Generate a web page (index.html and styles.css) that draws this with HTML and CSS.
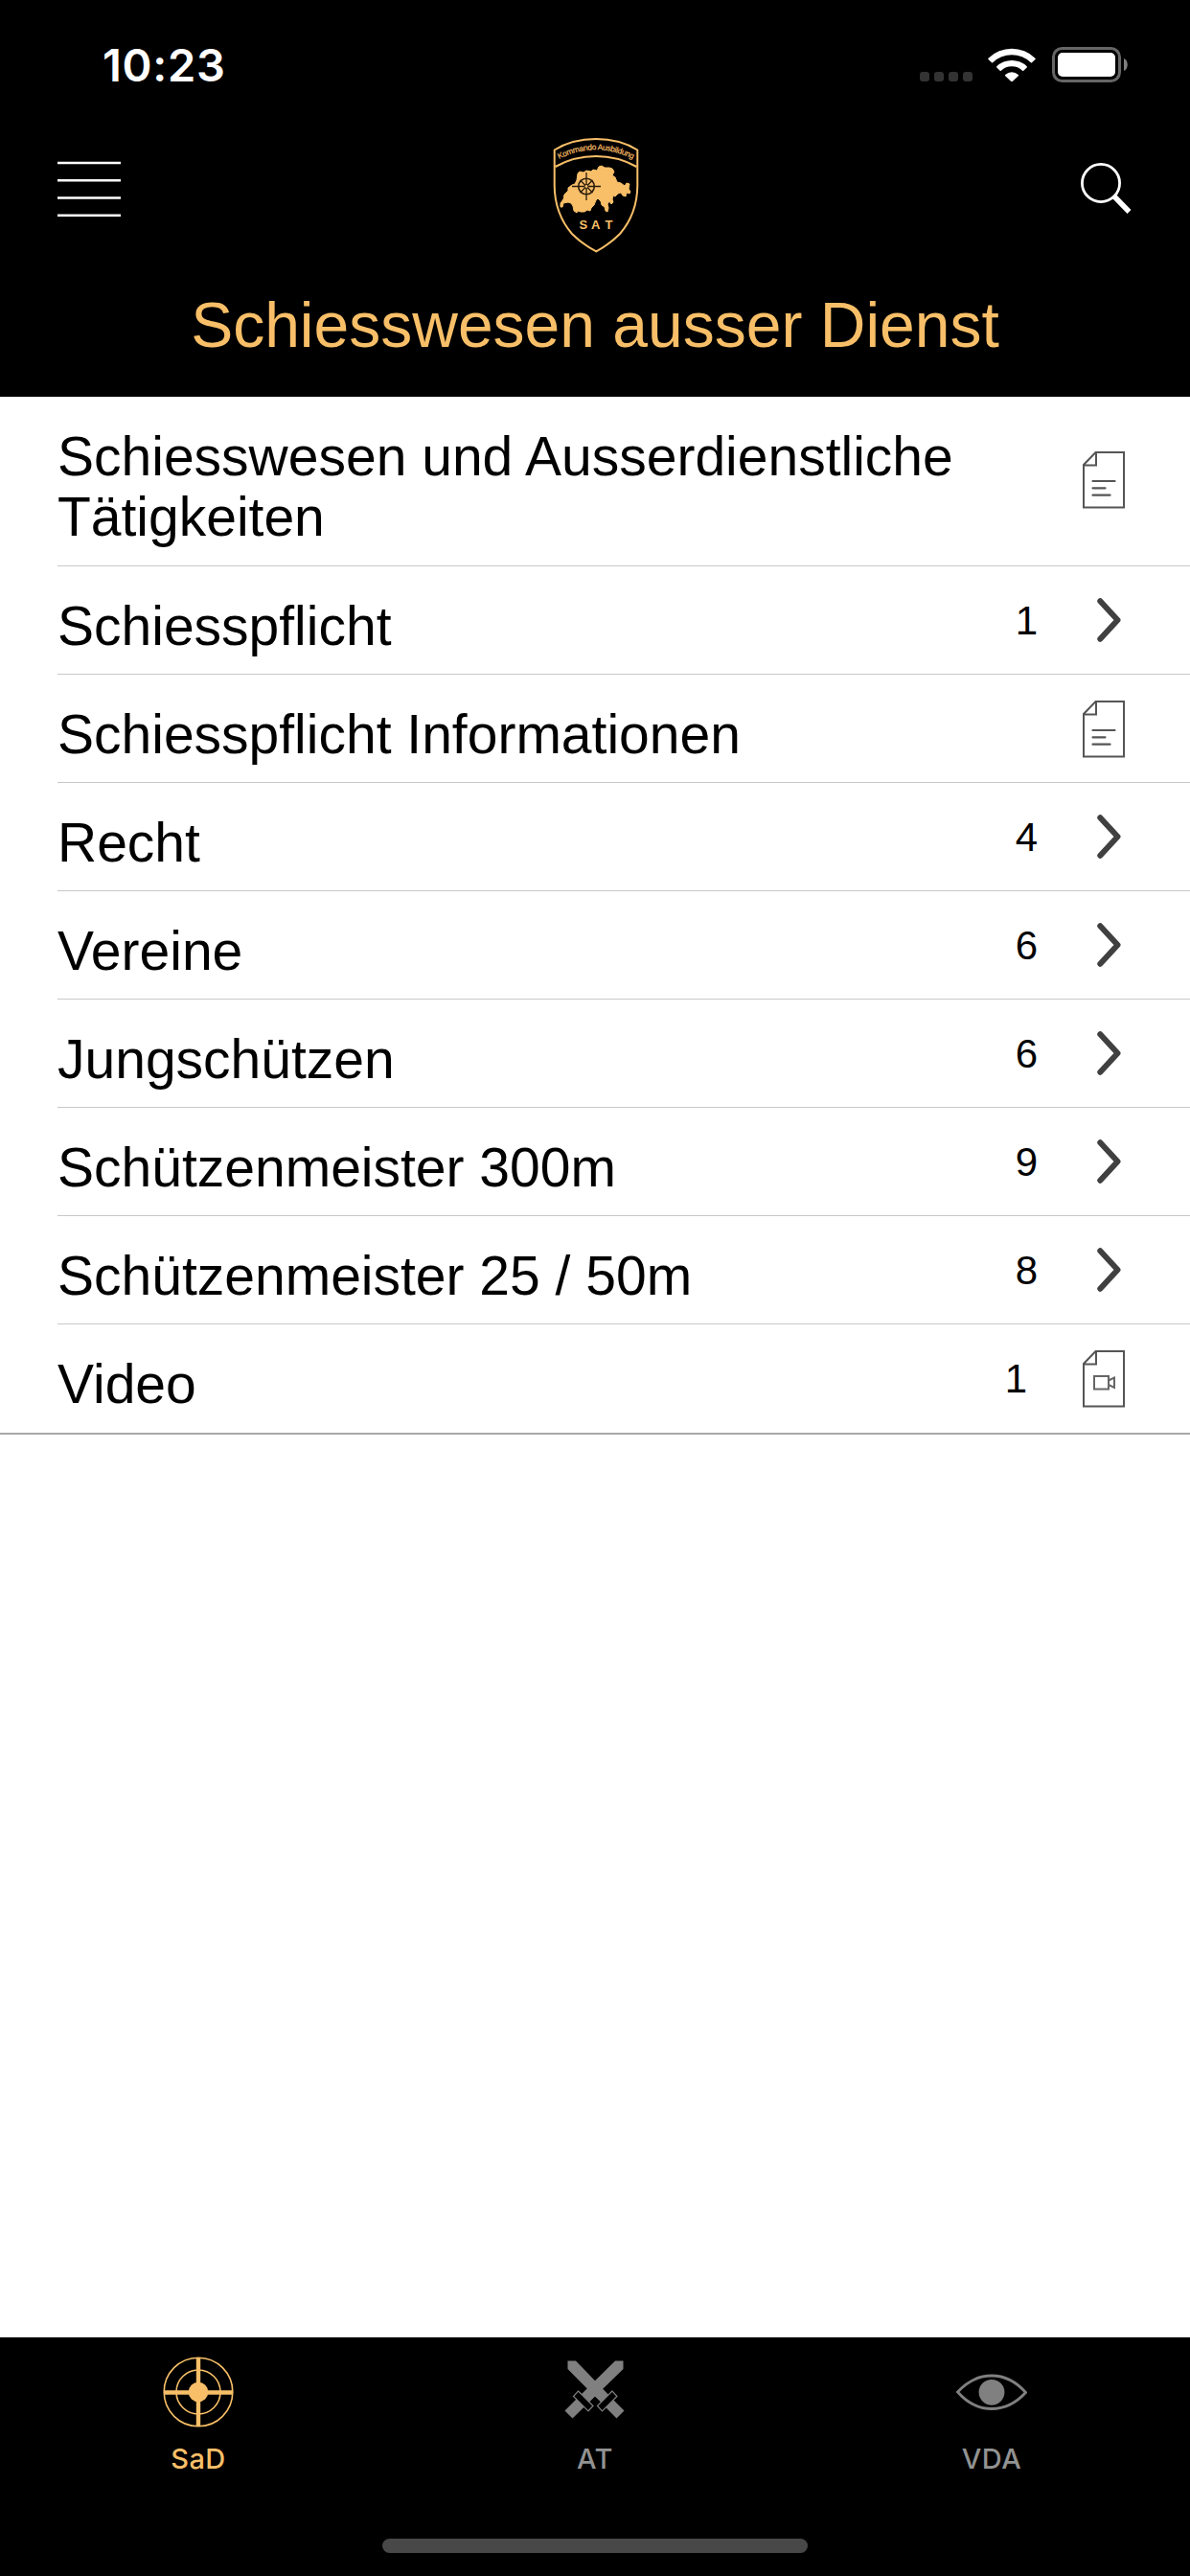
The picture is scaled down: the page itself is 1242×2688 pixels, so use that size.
FILE: index.html
```
<!DOCTYPE html>
<html lang="de">
<head>
    <meta charset="UTF-8">
    <meta name="viewport" content="width=device-width, initial-scale=1.0">
    <title>Schiesswesen ausser Dienst</title>
    <link rel="stylesheet" href="styles.css">
</head>
<body>
    <!-- shared icons -->
    <svg class="sprite">
        <symbol id="page" viewBox="0 0 44 60">
            <path d="M13.5 1H43v57.5H1V14z M14 1v13.5H1" fill="none" stroke="#555" stroke-width="2"/>
        </symbol>
        <symbol id="doc" viewBox="0 0 44 60">
            <use href="#page"/>
            <path d="M10.500 31h23M10.500 38.300h13M10.500 45.700h18" fill="none" stroke="#555" stroke-width="2.200" stroke-linecap="round"/>
        </symbol>
        <symbol id="video" viewBox="0 0 44 60">
            <use href="#page"/>
            <path d="M12 27h15v13.500H12z M27 31.500l6-3v10.500l-6-3" fill="none" stroke="#666" stroke-width="2"/>
        </symbol>
        <symbol id="chevron" viewBox="0 0 26 46">
            <path d="M3.300 3.300L21.500 23 3.300 42.700" fill="none" stroke="#404040" stroke-width="6" stroke-linecap="round" stroke-linejoin="round"/>
        </symbol>
    </svg>

    <div class="screen">
        <header class="header">
            <div class="status">
                <span class="time">10:23</span>
                <div class="status-icons">
                    <svg class="signal" viewBox="0 0 55 10">
                        <g fill="#333">
                            <rect width="10" height="10" rx="3"/>
                            <rect x="15" width="10" height="10" rx="3"/>
                            <rect x="30" width="10" height="10" rx="3"/>
                            <rect x="45" width="10" height="10" rx="3"/>
                        </g>
                    </svg>
                    <svg class="wifi" viewBox="0 0 50 36" fill="#fff">
                        <path d="M.6 11.700a35 35 0 0 1 48.800 0c.5.500.5.900.1 1.300L46 16.300c-.4.400-.8.400-1.200 0a28.500 28.500 0 0 0-39.600 0c-.4.400-.8.400-1.200 0L.5 13c-.4-.4-.4-.8.100-1.300z"/>
                        <path d="M9.300 20.300a22.500 22.500 0 0 1 31.400 0c.4.400.4.800 0 1.200l-3.400 3.300c-.4.400-.8.400-1.200 0a16 16 0 0 0-22.200 0c-.4.400-.8.400-1.200 0l-3.400-3.300c-.4-.4-.4-.8 0-1.200z"/>
                        <path d="M18.200 29a10 10 0 0 1 13.600 0c.4.400.4.800 0 1.200l-6.200 5.900c-.4.400-.8.400-1.200 0l-6.200-5.900c-.4-.4-.4-.8 0-1.200z"/>
                    </svg>
                    <svg class="battery" viewBox="0 0 79 37">
                        <rect x="1.500" y="1.500" width="69" height="34" rx="9" fill="none" stroke="#666" stroke-width="3"/>
                        <rect x="6" y="6" width="60" height="25" rx="5" fill="#fff"/>
                        <path d="M75 12c5 2 5 11 0 13z" fill="#808080"/>
                    </svg>
                </div>
            </div>
            <div class="nav">
                <svg class="menu" viewBox="0 0 66 60">
                    <path d="M0 2h66M0 20.300h66M0 38.500h66M0 56.800h66" stroke="#fff" stroke-width="2.500"/>
                </svg>
                <svg class="logo" viewBox="0 0 120 145">
                    <path d="M17.700 26.500Q36 15 61 15T104.300 26.500V64Q104 93 86 114 75 125 61.300 132.300 47 125 36 114 18 93 17.700 64z" fill="none" stroke="#f8bf68" stroke-width="2"/>
                    <path d="M18.500 44Q38 33 61 33T103.500 44" fill="none" stroke="#f8bf68" stroke-width="2.200"/>
                    <path id="arc" d="M22.500 36Q42 26.300 61 26.300T100.500 36.500" fill="none"/>
                    <text class="logo-ring"><textPath href="#arc" textLength="80">Kommando Ausbildung</textPath></text>
                    <path d="M42 51l2-2 4 1 3-2 5 1 2-2 4 1 2-4 3-1 3 2 5 0 3 1 2 3-2 4 3 2 2 5 4 1 4 3 2-3 3 1-1 5 2 3-1 2-3-1-1 4-3-1-2-3-3 1-3 3-2-1-1 4 1 3-2 2-2-3-2 3 1 4-1 4-2-1-1-4-3-2-1-4-3-3-2 2-2 5-3 3-1 3-3-1-3 2-4 0-3-1-1 2-3-2-1-5-2-3-3-1-5 1-1 4-2 0 0-4 3-4 1-5 4-4 0-3 4-3 3-1 2-4z" fill="#f8bf68" stroke="#f8bf68" stroke-width="1" stroke-linejoin="round"/>
                    <g fill="none" stroke="#2b1c0c">
                        <circle cx="51" cy="64.500" r="8.300" stroke-width="1.600"/>
                        <path d="M51 50v29M36 64.500h30M44.500 58l13 13M57.500 58l-13 13" stroke-width="1.300"/>
                    </g>
                    <circle cx="51" cy="64.500" r="2" fill="#f8bf68" stroke="#2b1c0c"/>
                    <text class="logo-name" x="43.500" y="109">S</text>
                    <text class="logo-name" x="56" y="109">A</text>
                    <text class="logo-name" x="70.500" y="109">T</text>
                </svg>
                <svg class="search" viewBox="0 0 54 54" fill="none" stroke="#fff">
                    <circle cx="21" cy="21" r="19.600" stroke-width="2.800"/>
                    <path d="M34.500 34.500L50.500 51" stroke-width="5.500"/>
                </svg>
            </div>
            <h1>Schiesswesen ausser Dienst</h1>
        </header>

        <ul class="list">
            <li class="tall">
                <span class="label">Schiesswesen und Ausserdienstliche Tätigkeiten</span>
                <svg class="doc"><use href="#doc"/></svg>
            </li>
            <li>
                <span class="label">Schiesspflicht</span>
                <span class="count">1</span>
                <svg class="chevron"><use href="#chevron"/></svg>
            </li>
            <li>
                <span class="label">Schiesspflicht Informationen</span>
                <svg class="doc"><use href="#doc"/></svg>
            </li>
            <li>
                <span class="label">Recht</span>
                <span class="count">4</span>
                <svg class="chevron"><use href="#chevron"/></svg>
            </li>
            <li>
                <span class="label">Vereine</span>
                <span class="count">6</span>
                <svg class="chevron"><use href="#chevron"/></svg>
            </li>
            <li>
                <span class="label">Jungschützen</span>
                <span class="count">6</span>
                <svg class="chevron"><use href="#chevron"/></svg>
            </li>
            <li>
                <span class="label">Schützenmeister 300m</span>
                <span class="count">9</span>
                <svg class="chevron"><use href="#chevron"/></svg>
            </li>
            <li>
                <span class="label">Schützenmeister 25 / 50m</span>
                <span class="count">8</span>
                <svg class="chevron"><use href="#chevron"/></svg>
            </li>
            <li>
                <span class="label">Video</span>
                <span class="count">1</span>
                <svg class="doc"><use href="#video"/></svg>
            </li>
        </ul>

        <footer class="footer">
            <nav class="tabs">
                <a class="tab active">
                    <svg viewBox="0 0 74 74" fill="none" stroke="#f8bf68">
                        <circle cx="37" cy="37" r="35.800" stroke-width="1.600"/>
                        <circle cx="37" cy="37" r="23" stroke-width="1.600"/>
                        <path d="M37 1v72M1 37.500h72" stroke-width="4.400"/>
                        <circle cx="37" cy="37" r="10.300" fill="#f8bf68" stroke="none"/>
                    </svg>
                    <span>SaD</span>
                </a>
                <a class="tab">
                    <svg viewBox="0 0 74 74">
                        <g fill="#808080">
                            <path d="M8.500 4.500H17L57 46l10.500 10.500-8 8L8.500 13z"/>
                            <path d="M66.500 4.500H58L16 46 5.500 56.500l8 8L66.500 13z"/>
                        </g>
                        <path d="M37.500 42.500l5 4.500-5 4.500-5-4.500z" fill="#000"/>
                        <g fill="#000" stroke="#808080" stroke-width="1.200">
                            <path d="M19.500 36l15.500 15.500-5 5.500L14.500 41.500z"/>
                            <path d="M55 36L39.500 51.500l5 5.500L60 41.500z"/>
                        </g>
                    </svg>
                    <span>AT</span>
                </a>
                <a class="tab">
                    <svg viewBox="0 0 74 74">
                        <path d="M1.500 37Q17 20 37 20t35.500 17.500Q57 54.500 37 54.500T1.500 37z" fill="none" stroke="#808080" stroke-width="2.800"/>
                        <circle cx="37" cy="37.300" r="13.400" fill="#808080"/>
                    </svg>
                    <span>VDA</span>
                </a>
            </nav>
            <div class="home-bar"></div>
        </footer>
    </div>
</body>
</html>
```
FILE: styles.css
```
* {
    box-sizing: border-box;
}

body {
    margin: 0;
    background: #fff;
    font-family: "Liberation Sans", Arial, sans-serif;
    color: #000;
}

svg {
    display: block;
    flex-shrink: 0;
}

.sprite {
    position: absolute;
    width: 0;
    height: 0;
}

.screen {
    display: flex;
    flex-direction: column;
    height: 2688px;
}

/* header */
.header {
    height: 414px;
    background: #000;
}

.status {
    display: flex;
    justify-content: space-between;
    height: 130px;
    padding: 39px 65px 0 107px;
}

.time {
    font-family: Inter, sans-serif;
    font-size: 47px;
    font-weight: 600;
    line-height: 57px;
    letter-spacing: 0.7px;
    color: #fff;
}

.status-icons {
    display: flex;
    align-items: flex-end;
    height: 47px;
}

.signal {
    width: 55px;
    height: 10px;
    margin-bottom: 1px;
}

.wifi {
    width: 50px;
    height: 36px;
    margin: 0 17px 1px 16px;
}

.battery {
    width: 79px;
    height: 37px;
}

.nav {
    display: flex;
    justify-content: space-between;
    align-items: center;
    height: 145px;
    padding: 0 60px;
}

.menu {
    width: 66px;
    height: 60px;
    margin-top: -10px;
}

.logo {
    width: 120px;
    height: 145px;
}

.logo-ring {
    font-size: 8.4px;
    fill: #f8bf68;
    stroke: #f8bf68;
    stroke-width: 0.2px;
}

.logo-name {
    font-size: 13px;
    font-weight: bold;
    fill: #f8bf68;
}

.search {
    width: 54px;
    height: 54px;
    margin-top: -11px;
    margin-left: 12px;
}

h1 {
    margin: 26px 0 0;
    font-size: 66px;
    font-weight: normal;
    line-height: 76px;
    text-align: center;
    color: #f8bf68;
}

/* list */
.list {
    flex: 1;
    margin: 0;
    padding: 0;
    list-style: none;
}

.list li {
    display: flex;
    align-items: center;
    height: 113px;
    margin-left: 60px;
    border-bottom: 1px solid #c8c7cc;
}

.list .tall {
    height: 177px;
}

.list li:last-child {
    height: 115px;
    margin-left: 0;
    padding: 0 0 1px 60px;
    border-bottom: 2px solid #a8a8a8;
}

.label {
    flex: 1;
    padding-top: 13px;
    font-size: 57px;
    line-height: 63px;
}

.tall .label {
    padding-top: 12px;
}

.count {
    padding-top: 2px;
    font-size: 42px;
    line-height: 48px;
}

.chevron {
    width: 26px;
    height: 46px;
    margin: 0 71px 0 62px;
}

.doc {
    width: 44px;
    height: 60px;
    margin: 2px 68px 0 58px;
}

.tall .doc {
    margin-top: -2px;
}

/* tab bar */
.footer {
    height: 249px;
    background: #000;
}

.tabs {
    display: flex;
    height: 210px;
}

.tab {
    display: flex;
    flex: 1;
    flex-direction: column;
    align-items: center;
    padding-top: 20px;
    font-family: Inter, sans-serif;
    font-size: 29px;
    font-weight: 500;
    line-height: 36px;
    letter-spacing: 0.5px;
    color: #929292;
}

.tab svg {
    width: 74px;
    height: 74px;
    margin-bottom: 15px;
}

.active {
    color: #f8bf68;
}

.home-bar {
    width: 444px;
    height: 15px;
    margin: 0 auto;
    border-radius: 8px;
    background: #484848;
}
```
